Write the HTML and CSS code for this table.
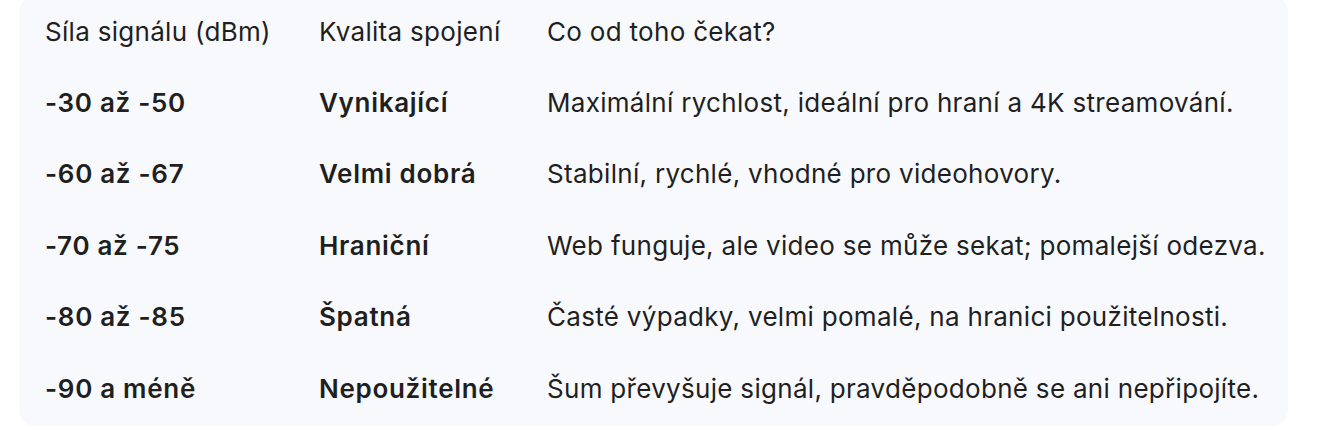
FILE: index.html
```html
<!DOCTYPE html>
<html lang="cs">
<head>
<meta charset="utf-8">
<link rel="stylesheet" href="styles.css">
</head>
<body>
<div class="card">
<table class="signal">
<colgroup><col class="w1"><col class="w2"><col class="w3"></colgroup>
<thead>
<tr><th class="c1">Síla signálu (dBm)</th><th>Kvalita spojení</th><th class="c3">Co od toho čekat?</th></tr>
</thead>
<tbody>
<tr><td class="c1"><b>-30 až -50</b></td><td><b>Vynikající</b></td><td class="c3">Maximální rychlost, ideální pro hraní a 4K streamování.</td></tr>
<tr><td class="c1"><b>-60 až -67</b></td><td><b>Velmi dobrá</b></td><td class="c3">Stabilní, rychlé, vhodné pro videohovory.</td></tr>
<tr><td class="c1"><b>-70 až -75</b></td><td><b>Hraniční</b></td><td class="c3">Web funguje, ale video se může sekat; pomalejší odezva.</td></tr>
<tr><td class="c1"><b>-80 až -85</b></td><td><b>Špatná</b></td><td class="c3">Časté výpadky, velmi pomalé, na hranici použitelnosti.</td></tr>
<tr><td class="c1"><b>-90 a méně</b></td><td><b>Nepoužitelné</b></td><td class="c3">Šum převyšuje signál, pravděpodobně se ani nepřipojíte.</td></tr>
</tbody>
</table>
</div>
</body>
</html>
```
FILE: styles.css
```css
html, body {
  margin: 0;
  padding: 0;
  background: #ffffff;
}
body {
  font-family: Inter, "Noto Sans", sans-serif;
  color: #1f1f1f;
  overflow: hidden;
}
.card {
  margin: -4px 0 0 19px;
  width: 1269px;
  background: #f8f9fc;
  border-radius: 16px;
  padding: 0 0 2px 0;
  box-sizing: border-box;
}
.signal {
  border-collapse: collapse;
  table-layout: fixed;
  width: 100%;
  font-size: 26px;
  line-height: 36px;
  letter-spacing: 0.3px;
}
.w1 { width: 300px; }
.w2 { width: 228px; }
.signal th,
.signal td {
  text-align: left;
  font-weight: 400;
  padding: 17.7px 0;
  vertical-align: middle;
  white-space: nowrap;
}
.signal b {
  font-weight: 600;
  letter-spacing: 0.7px;
}
.signal .c1 {
  padding-left: 26px;
}
.signal .c3 {
  padding-right: 25px;
}
```
